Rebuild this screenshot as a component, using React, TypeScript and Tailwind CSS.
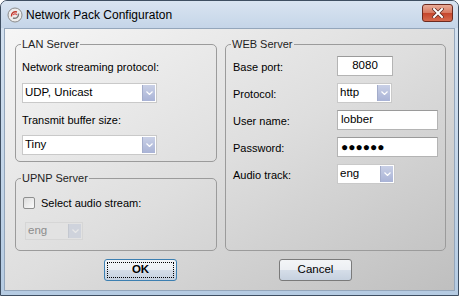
import React from 'react';

const font = { fontFamily: '"Liberation Sans", Arial, sans-serif' };

const Arrow: React.FC<{ disabled?: boolean }> = ({ disabled }) => (
  <div
    className={
      'w-[13px] self-stretch flex items-center justify-center border-l ' +
      (disabled
        ? 'bg-[#cfd3dc] border-[#c4c8d0]'
        : 'bg-linear-to-b from-[#c9d0e6] to-[#a9b3d6] border-[#a3acca]')
    }
  >
    <svg width="7" height="4" viewBox="0 0 7 4">
      <path d="M0.5 0.5 L3.5 3.5 L6.5 0.5" fill="none" stroke={disabled ? '#e8e8e8' : '#ffffff'} strokeWidth="1.2" />
    </svg>
  </div>
);

const Combo: React.FC<{ value: string; width: string; disabled?: boolean; height?: string }> = ({ value, width, disabled, height = 'h-[20px]' }) => (
  <div
    className={`${width} ${height} flex items-stretch p-[1px] border ${
      disabled ? 'bg-[#e2e2e2] border-[#d6d6d6] text-[#8c8c8c]' : 'bg-white border-[#c9c9c9] text-black'
    }`}
  >
    <div className="flex-1 flex items-center pl-[1px] text-[11.5px] leading-none">{value}</div>
    <Arrow disabled={disabled} />
  </div>
);

const Field: React.FC<{ width: string; children: React.ReactNode; center?: boolean }> = ({ width, children, center }) => (
  <div
    className={`${width} h-[20px] bg-white border border-[#b4b4b4] border-t-[#9a9a9a] flex items-center px-[3px] text-[11.5px] leading-none text-black ${
      center ? 'justify-center' : ''
    }`}
  >
    {children}
  </div>
);

const Group: React.FC<{ title: string; className: string; children: React.ReactNode }> = ({ title, className, children }) => (
  <fieldset className={`border border-[#9b9b9b] rounded-[5px] pl-[6px] pr-[6px] ${className}`}>
    <legend className="-ml-[1px] px-[1px] text-[11px] leading-[13px] text-[#1e1e1e]">{title}</legend>
    {children}
  </fieldset>
);

const WindowIcon = () => (
  <svg width="16" height="16" viewBox="0 0 16 16">
    <circle cx="8" cy="8" r="7" fill="#ececec" stroke="#8b8b8b" strokeWidth="1" />
    <path d="M4.5 9.5 C4 6 7 4 10 5" fill="none" stroke="#c0392b" strokeWidth="1.4" />
    <path d="M11.5 6.5 C12 10 9 12 6 11" fill="none" stroke="#7a7a7a" strokeWidth="1.4" />
    <path d="M6 8 C7 6.5 9 6.5 10 8" fill="none" stroke="#d9534f" strokeWidth="1.2" />
  </svg>
);

const Button: React.FC<{ label: string; isDefault?: boolean }> = ({ label, isDefault }) => (
  <div
    className={`w-[73px] h-[22px] rounded-[3px] border p-[2px] bg-[linear-gradient(to_bottom,#f3f5f7_0%,#eceff3_48%,#d5dde8_52%,#c6d1df_100%)] ${
      isDefault ? 'border-[#3c7fb1]' : 'border-[#7a7a7a]'
    }`}
  >
    <div
      className={`h-full flex items-center justify-center text-[11.5px] leading-none text-black ${
        isDefault ? 'border border-dotted border-black font-bold' : ''
      }`}
    >
      {label}
    </div>
  </div>
);

export default function App() {
  return (
    <div style={font} className="w-[459px] h-[296px] flex flex-col border border-[#3f4f62] rounded-t-[7px] bg-linear-to-b from-[#d6e3f1] to-[#b5cbe2] overflow-hidden">
      <div className="h-[27px] flex items-center pl-[6px] pr-[5px] bg-linear-to-b from-[#d9e4f1] to-[#c5d5e8]">
        <WindowIcon />
        <span className="ml-[3px] text-[12px] leading-none text-black">Network Pack Configuraton</span>
        <div className="ml-auto self-start mt-[3px] w-[31px] h-[18px] rounded-[3px] border border-[#6d2a1f] bg-[linear-gradient(to_bottom,#e9ab97_0%,#d87a62_48%,#c5462c_52%,#d66a4e_100%)] flex items-center justify-center">
          <svg width="12" height="10" viewBox="0 0 12 10">
            <path d="M2 1 L10 9 M10 1 L2 9" stroke="#5a2a22" strokeWidth="3.4" strokeLinecap="square" />
            <path d="M2 1 L10 9 M10 1 L2 9" stroke="#ffffff" strokeWidth="2" strokeLinecap="square" />
          </svg>
        </div>
      </div>

      <div className="mx-[3px] mb-[4px] flex-1 flex flex-col border border-[#94a6bb] bg-linear-to-br from-[#f6f6f6] via-[#dedede] to-[#bfbfbf] pt-[9px] pl-[10px]">
        <div className="flex gap-[8px]">
          <div className="w-[202px] flex flex-col gap-[10px]">
            <Group title="LAN Server" className="h-[124px]">
              <div className="mt-[9px] text-[11px] leading-[14px] text-black">Network streaming protocol:</div>
              <div className="mt-[9px]">
                <Combo value="UDP, Unicast" width="w-[135px]" />
              </div>
              <div className="mt-[10px] text-[11px] leading-[14px] text-black">Transmit buffer size:</div>
              <div className="mt-[8px]">
                <Combo value="Tiny" width="w-[135px]" />
              </div>
            </Group>
            <Group title="UPNP Server" className="h-[79px]">
              <div className="mt-[11px] flex items-center h-[14px] text-[11px] text-black">
                <div className="ml-[1px] w-[12px] h-[12px] rounded-[2px] border border-[#8e8f8f] bg-linear-to-br from-[#dcdcdc] to-[#fbfbfb]" />
                <span className="ml-[6px]">Select audio stream:</span>
              </div>
              <div className="mt-[12px] ml-[3px]">
                <Combo value="eng" width="w-[58px]" height="h-[18px]" disabled />
              </div>
            </Group>
          </div>

          <Group title="WEB Server" className="w-[221px] h-[213px]">
            <div className="mt-[5px] ml-[1px] grid grid-cols-[104px_1fr] gap-y-[7px] text-[11px] text-black">
              <span className="self-center pt-[2px]">Base port:</span>
              <Field width="w-[56px]" center>8080</Field>
              <span className="self-center pt-[2px]">Protocol:</span>
              <Combo value="http" width="w-[55px]" />
              <span className="self-center pt-[2px]">User name:</span>
              <Field width="w-[101px]">lobber</Field>
              <span className="self-center pt-[2px]">Password:</span>
              <Field width="w-[101px]">
                <span className="text-[12px] tracking-[0px]">●●●●●●</span>
              </Field>
              <span className="self-center pt-[2px]">Audio track:</span>
              <Combo value="eng" width="w-[58px]" />
            </div>
          </Group>
        </div>

        <div className="mt-[8px] flex ml-[89px] gap-[102px]">
          <Button label="OK" isDefault />
          <Button label="Cancel" />
        </div>
      </div>
    </div>
  );
}
